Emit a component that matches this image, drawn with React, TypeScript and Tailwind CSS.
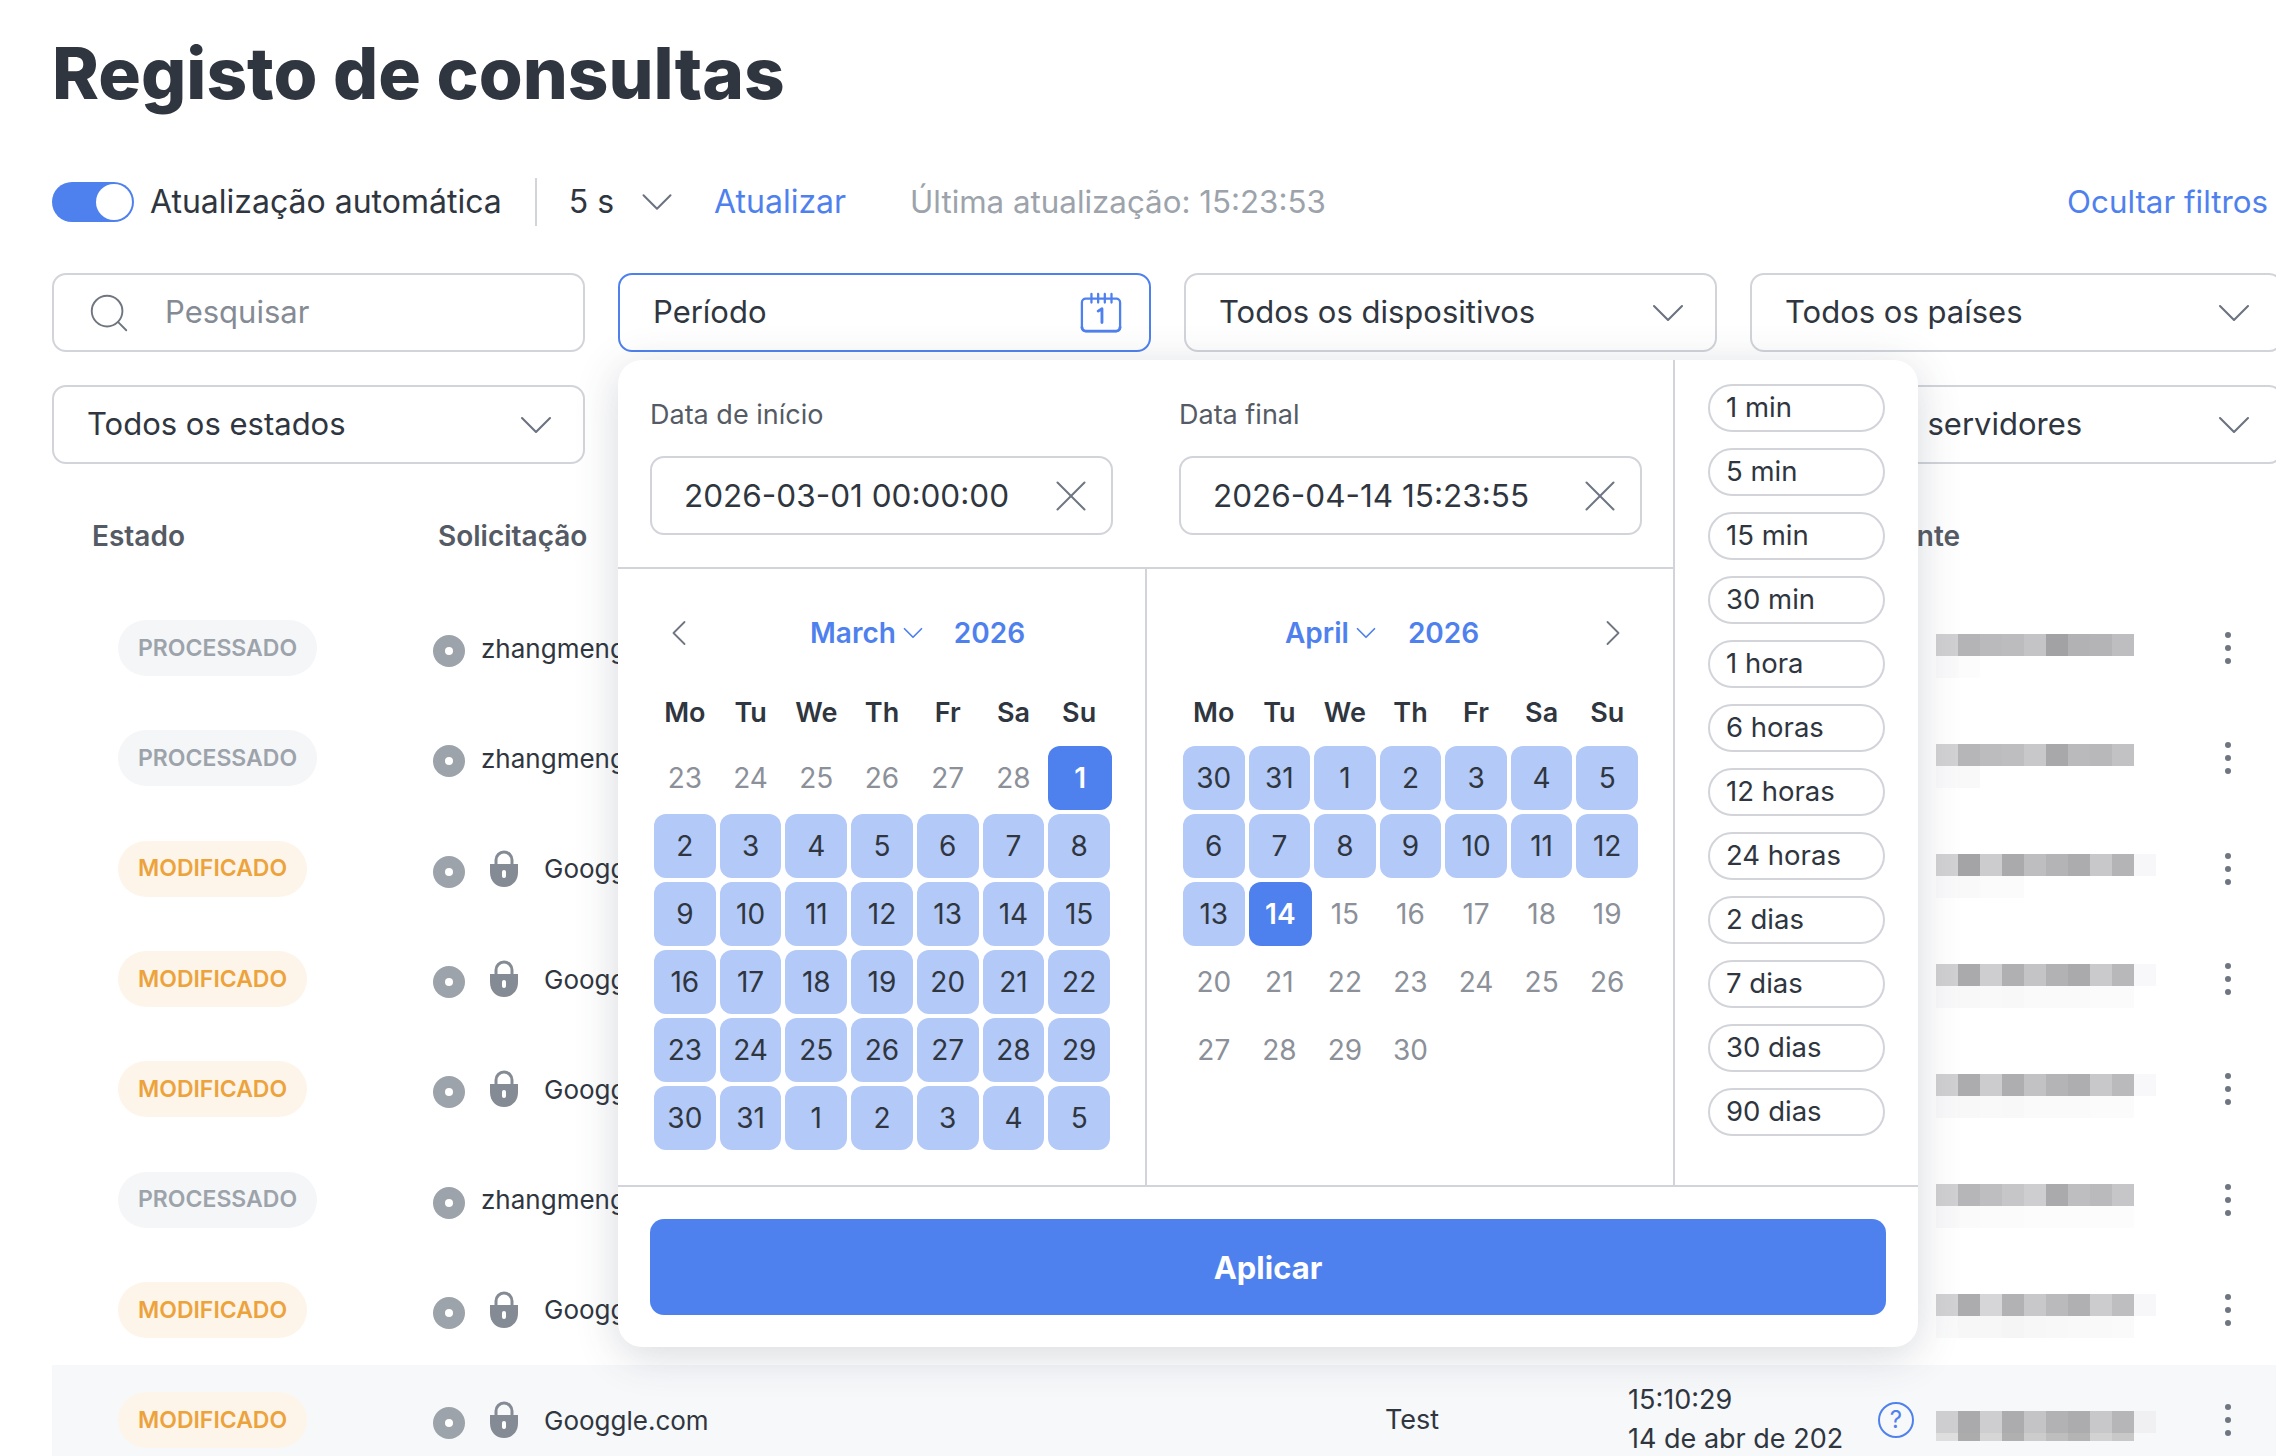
import { ChevronDown, ChevronLeft, ChevronRight, Search, X } from "lucide-react";

type Row = {
  status: "PROCESSADO" | "MODIFICADO";
  domain: string;
  locked: boolean;
  device?: string;
  time?: string;
  date?: string;
  mosaic: number[];
  faint: number[];
  stripHeight?: number;
};

const ROWS: Row[] = [
  { status: "PROCESSADO", domain: "zhangmeng.com", locked: false, mosaic: [208, 180, 186, 188, 196, 162, 178, 180, 190], faint: [250, 252] },
  { status: "PROCESSADO", domain: "zhangmeng.com", locked: false, mosaic: [210, 182, 188, 190, 200, 168, 186, 184, 194], faint: [250, 249] },
  { status: "MODIFICADO", domain: "Googgle.com", locked: true, mosaic: [210, 164, 204, 170, 190, 180, 172, 200, 180, 247], faint: [250, 249, 251, 251] },
  { status: "MODIFICADO", domain: "Googgle.com", locked: true, mosaic: [208, 170, 206, 176, 196, 178, 170, 202, 184, 248], faint: [249, 248, 249, 248, 250, 250, 250, 251, 251] },
  { status: "MODIFICADO", domain: "Googgle.com", locked: true, mosaic: [208, 172, 204, 174, 194, 180, 174, 200, 186, 248], faint: [249, 248, 249, 248, 250, 250, 250, 251, 251] },
  { status: "PROCESSADO", domain: "zhangmeng.com", locked: false, mosaic: [208, 182, 190, 198, 206, 170, 190, 186, 198], faint: [249, 250, 251, 251, 252, 252, 252, 252, 252] },
  { status: "MODIFICADO", domain: "Googgle.com", locked: true, mosaic: [210, 172, 214, 178, 200, 186, 176, 204, 190, 247], faint: [250, 247, 247, 245, 247, 248, 249, 249, 250] },
  { status: "MODIFICADO", domain: "Googgle.com", locked: true, device: "Test", time: "15:10:29", date: "14 de abr de 2026", mosaic: [206, 170, 206, 172, 196, 178, 172, 200, 182, 240], faint: [222, 172, 214, 176, 204, 190, 180, 210, 200], stripHeight: 8 },
];

const WEEK = ["Mo", "Tu", "We", "Th", "Fr", "Sa", "Su"];
const PRESETS = ["1 min", "5 min", "15 min", "30 min", "1 hora", "6 horas", "12 horas", "24 horas", "2 dias", "7 dias", "30 dias", "90 dias"];

type Day = { n: number; kind: "muted" | "range" | "picked" };

const MARCH: Day[] = [
  ...[23, 24, 25, 26, 27, 28].map((n) => ({ n, kind: "muted" as const })),
  { n: 1, kind: "picked" },
  ...Array.from({ length: 30 }, (_, i) => ({ n: i + 2, kind: "range" as const })),
  ...[1, 2, 3, 4, 5].map((n) => ({ n, kind: "range" as const })),
];

const APRIL: Day[] = [
  ...[30, 31].map((n) => ({ n, kind: "range" as const })),
  ...Array.from({ length: 12 }, (_, i) => ({ n: i + 1, kind: "range" as const })),
  { n: 13, kind: "range" },
  { n: 14, kind: "picked" },
  ...Array.from({ length: 16 }, (_, i) => ({ n: i + 15, kind: "muted" as const })),
];

function FilterBox({ label, active }: { label?: string; active?: boolean }) {
  return (
    <div
      className={`flex h-[79px] w-[533px] shrink-0 items-center justify-between rounded-[14px] border-2 pl-[33px] text-[31px] text-[#2f3640] ${
        active ? "border-[#4f81ee] pr-[27px]" : "border-[#d2d4da] pr-[19px]"
      }`}
    >
      <span>{label}</span>
      {active ? <CalendarIcon /> : <ChevronDown size={56} strokeWidth={0.9} className="text-[#6b7280]" />}
    </div>
  );
}

function CalendarIcon() {
  return (
    <svg width="42" height="44" viewBox="0 0 44 44" fill="none" stroke="#4f81ee" strokeWidth="2.4">
      <rect x="2" y="7" width="40" height="34" rx="4" />
      <path d="M2 36.5c0 3 2 4.5 4 4.5h32c2 0 4-1.500 4-4.500" strokeWidth="3" />
      <path d="M12 2v9M19 2v9M26 2v9M33 2v9" strokeLinecap="round" />
      <path d="M19 20l4-2.500V32" strokeWidth="3" strokeLinecap="round" strokeLinejoin="round" />
    </svg>
  );
}

function DiscIcon() {
  return (
    <svg width="32" height="32" viewBox="0 0 32 32" className="mt-[6px] shrink-0">
      <circle cx="16" cy="16" r="16" fill="#9ca3ab" />
      <circle cx="16" cy="16" r="4" fill="#ffffff" />
    </svg>
  );
}

function LockIcon() {
  return (
    <svg width="30" height="38" viewBox="0 0 30 38" className="shrink-0">
      <path d="M7 15V10a8 8 0 0 1 16 0v5" fill="none" stroke="#858b94" strokeWidth="3" />
      <path d="M1 14h28v8c0 9-6 15-14 15S1 31 1 22z" fill="#858b94" />
      <rect x="13" y="20" width="4" height="8" rx="2" fill="#ffffff" />
    </svg>
  );
}

function HelpIcon() {
  return (
    <div className="flex h-[36px] w-[36px] shrink-0 items-center justify-center rounded-full border-[2px] border-[#4f81ee] text-[24px] leading-none text-[#4f81ee]">
      ?
    </div>
  );
}

function Mosaic({ row, index }: { row: Row; index: number }) {
  return (
    // the blur blocks sit a little under the row centre and drift up row by row
    <div className="w-[220px] shrink-0" style={{ marginTop: 16 - index * 0.6 }}>
      <div className="flex">
        {row.mosaic.map((v, i) => (
          <div key={i} className="h-[22px] w-[22px]" style={{ background: `rgb(${v},${v},${v + 2})` }} />
        ))}
      </div>
      <div className="flex">
        {row.faint.map((v, i) => (
          <div key={i} className="w-[22px]" style={{ background: `rgb(${v},${v},${v + 1})`, height: row.stripHeight ?? 22 }} />
        ))}
      </div>
    </div>
  );
}

function Dots() {
  return (
    <div className="flex flex-col gap-[7px]">
      <span className="h-[6px] w-[6px] rounded-full bg-[#6f7681]" />
      <span className="h-[6px] w-[6px] rounded-full bg-[#6f7681]" />
      <span className="h-[6px] w-[6px] rounded-full bg-[#6f7681]" />
    </div>
  );
}

function TableRow({ row, index, last }: { row: Row; index: number; last: boolean }) {
  const modified = row.status === "MODIFICADO";
  return (
    <div className={`flex h-[110.3px] items-center ${last ? "bg-[#f7f8fa]" : ""}`}>
      <div className="w-[381px] shrink-0 pl-[66px]">
        <span
          className={`inline-flex h-[56px] items-center rounded-full px-[20px] text-[23px] font-semibold ${
            modified ? "bg-[#fdf5ea] text-[#eda33c]" : "bg-[#f5f6f7] text-[#9ca3ab]"
          }`}
        >
          {row.status}
        </span>
      </div>
      <div className="flex w-[952px] shrink-0 items-center text-[26px] text-[#2f3640]">
        <DiscIcon />
        {row.locked && (
          <span className="ml-[24px]">
            <LockIcon />
          </span>
        )}
        <span className={row.locked ? "ml-[25px]" : "ml-[16px]"}>{row.domain}</span>
      </div>
      <div className="w-[243px] shrink-0 text-[27px] text-[#2f3640]">{row.device}</div>
      <div className="-mt-[3px] mr-[33px] w-[216px] shrink-0 overflow-hidden whitespace-nowrap text-[27px] leading-[39px] text-[#2f3640]">
        <div>{row.time}</div>
        <div>{row.date}</div>
      </div>
      <div className="flex w-[59px] shrink-0 justify-start pl-[1px]">{row.date && <HelpIcon />}</div>
      <Mosaic row={row} index={index} />
      <div className="ml-[69px]">
        <Dots />
      </div>
    </div>
  );
}

function Calendar({ days }: { days: Day[] }) {
  return (
    <div className="grid grid-cols-7 gap-x-[4px]">
      {WEEK.map((w) => (
        <div key={w} className="flex h-[44px] items-center justify-center text-[27px] font-semibold text-[#2f3640]">
          {w}
        </div>
      ))}
      <div className="col-span-7 h-[11px]" />
      {days.map((d, i) => (
        <div
          key={i}
          className={`mb-[4px] flex h-[64px] items-center justify-center rounded-[12px] text-[28px] ${
            d.kind === "picked"
              ? "-mr-[2px] bg-[#4f81ee] font-semibold text-white"
              : d.kind === "range"
                ? "bg-[#b3c9f7] text-[#2f3640]"
                : "text-[#8b9099]"
          }`}
        >
          {d.n}
        </div>
      ))}
    </div>
  );
}

function DateField({ label, value }: { label: string; value: string }) {
  return (
    <div className="w-[463px]">
      <div className="text-[27px] leading-[36px] text-[#555b65]">{label}</div>
      <div className="mt-[23px] flex h-[79px] items-center justify-between rounded-[14px] border-2 border-[#d2d4da] pl-[32px] pr-[13px] text-[31.500px] text-[#2f3640]">
        <span>{value}</span>
        <X size={54} strokeWidth={0.9} className="text-[#6f7681]" />
      </div>
    </div>
  );
}

function RangePicker() {
  return (
    <div className="absolute left-[618px] top-[360px] z-10 w-[1300px] rounded-[24px] bg-white shadow-[0_8px_44px_rgba(55,65,85,0.2)]">
      <div className="flex h-[827px] border-b-2 border-[#d2d4da]">
        <div className="w-[1057px] shrink-0 border-r-2 border-[#d2d4da]">
          <div className="flex h-[209px] gap-[66px] border-b-2 border-[#d2d4da] pl-[32px] pt-[37px]">
            <DateField label="Data de início" value="2026-03-01 00:00:00" />
            <DateField label="Data final" value="2026-04-14 15:23:55" />
          </div>
          <div className="flex h-[616px]">
            <div className="w-[529px] shrink-0 border-r-2 border-[#d2d4da] pl-[36px] pr-[35px]">
              <div className="mb-[8px] mt-[14px] flex h-[100px] items-center">
                <ChevronLeft size={44} strokeWidth={1} className="ml-[3px] text-[#6f7681]" />
                <span className="ml-[109px] text-[28px] font-semibold text-[#4f81ee]">March</span>
                <ChevronDown size={34} strokeWidth={1.2} className="text-[#4f81ee]" />
                <span className="ml-[24px] text-[28px] font-semibold text-[#4f81ee]">2026</span>
              </div>
              <Calendar days={MARCH} />
            </div>
            <div className="flex-1 pl-[36px] pr-[35px]">
              <div className="mb-[8px] mt-[14px] flex h-[100px] items-center">
                <span className="ml-[102px] text-[28px] font-semibold text-[#4f81ee]">April</span>
                <ChevronDown size={34} strokeWidth={1.2} className="text-[#4f81ee]" />
                <span className="ml-[25px] text-[28px] font-semibold text-[#4f81ee]">2026</span>
                <ChevronRight size={44} strokeWidth={1} className="ml-auto mr-[3px] text-[#6f7681]" />
              </div>
              <Calendar days={APRIL} />
            </div>
          </div>
        </div>
        <div className="flex flex-1 flex-col gap-[16px] pl-[33px] pt-[24px]">
          {PRESETS.map((p) => (
            <div
              key={p}
              className="flex h-[48px] w-[177px] items-center rounded-full border-2 border-[#d2d4da] pl-[16px] text-[27.500px] text-[#2f3640]"
            >
              {p}
            </div>
          ))}
        </div>
      </div>
      <div className="px-[32px] py-[32px]">
        <button className="flex h-[96px] w-full items-center justify-center rounded-[14px] bg-[#4f81ee] pt-[3px] text-[31px] font-bold text-white">
          Aplicar
        </button>
      </div>
    </div>
  );
}

export default function App() {
  return (
    <div className="relative h-[1456px] w-full overflow-hidden bg-white pl-[52px] font-['Inter',sans-serif]">
      <h1 className="pt-[32px] text-[71px] font-extrabold leading-[82px] text-[#2f3640]">Registo de consultas</h1>

      <div className="mt-[68px] flex h-[40px] items-center pr-[8px] text-[32px]">
        <div className="flex h-[40px] w-[82px] items-center justify-end rounded-full bg-[#4f81ee] pr-[2px]">
          <span className="h-[36px] w-[36px] rounded-full bg-white" />
        </div>
        <span className="ml-[16px] text-[#2f3640]">Atualização automática</span>
        <span className="ml-[33px] h-[48px] w-[2px] shrink-0 bg-[#d2d4da]" />
        <span className="ml-[32px] text-[#2f3640]">5 s</span>
        <ChevronDown size={54} strokeWidth={0.9} className="ml-[16px] text-[#6b7280]" />
        <span className="ml-[30px] text-[#4f81ee]">Atualizar</span>
        <span className="ml-[64px] text-[31.300px] text-[#9ca3ab]">Última atualização: 15:23:53</span>
        <span className="ml-auto text-[31.300px] text-[#4f81ee]">Ocultar filtros</span>
      </div>

      <div className="mt-[51px] flex gap-[33px]">
        <div className="flex h-[79px] w-[533px] shrink-0 items-center rounded-[14px] border-2 border-[#d2d4da] pl-[32px] text-[31px] text-[#858b94]">
          <Search size={46} strokeWidth={1} className="text-[#6f7681]" />
          <span className="ml-[33px]">Pesquisar</span>
        </div>
        <FilterBox label="Período" active />
        <FilterBox label="Todos os dispositivos" />
        <FilterBox label="Todos os países" />
      </div>
      <div className="mt-[33px] flex gap-[33px]">
        <FilterBox label="Todos os estados" />
        <FilterBox />
        <FilterBox />
        <FilterBox label="Todos os servidores" />
      </div>

      <div className="mt-[50px] flex h-[44px] items-center text-[28px] font-semibold text-[#555b65]">
        <span className="ml-[40px] w-[346px]">Estado</span>
        <span className="w-[1427px]">Solicitação</span>
        <span>Cliente</span>
      </div>

      <div className="mt-[35px]">
        {ROWS.map((r, i) => (
          <TableRow key={i} row={r} index={i} last={i === ROWS.length - 1} />
        ))}
      </div>

      <RangePicker />
    </div>
  );
}
